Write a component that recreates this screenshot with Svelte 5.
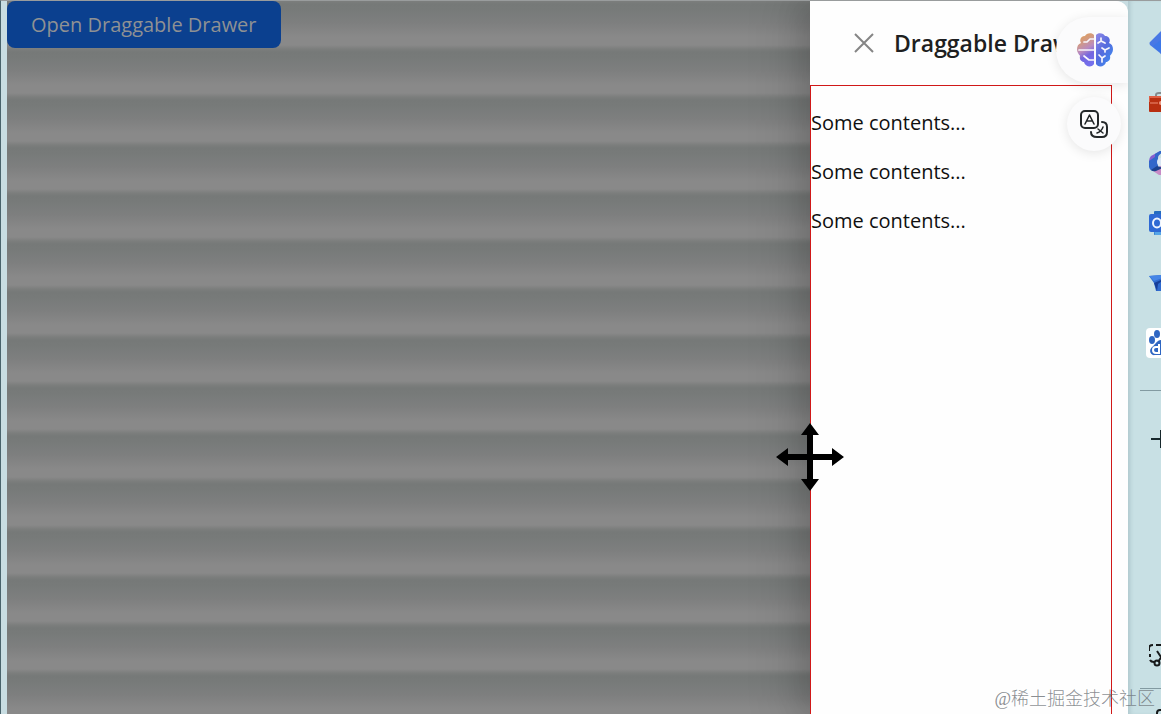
<script>
    let open = true;
    let contents = ['Some contents...', 'Some contents...', 'Some contents...'];
    let apps = ['Shopping', 'Tools', 'Microsoft 365', 'Outlook', 'Drop', 'Baidu'];
</script>

<div class="window">
    <main>
        <div class="page">
            <button class="primary" on:click={() => (open = true)}>Open Draggable Drawer</button>
        </div>

        {#if open}
            <section class="drawer" aria-labelledby="drawer-title">
                <header>
                    <button class="close" aria-label="Close" on:click={() => (open = false)}>
                        <svg width="20" height="20" viewBox="0 0 20 20">
                            <path d="M1 1 19 19M19 1 1 19" fill="none" stroke="#858585" stroke-width="2" />
                        </svg>
                    </button>
                    <h2 id="drawer-title">Draggable Drawer</h2>
                </header>
                <div class="drawer-body">
                    {#each contents as text}
                        <p>{text}</p>
                    {/each}
                </div>
                <!-- move pointer on the drag edge -->
                <svg class="pointer" width="68" height="68" viewBox="0 0 68 68" aria-hidden="true">
                    <path d="M34 0 43 12H37V31H56V25L68 34 56 43V37H37V56H43L34 68 25 56H31V37H12V43L0 34 12 25V31H31V12H25Z" />
                </svg>
            </section>
        {/if}

        <!-- floating extension buttons -->
        <div class="floating">
            <button class="brain" aria-label="Assistant">
                <svg width="36" height="34" viewBox="0 0 36 34">
                    <defs>
                        <linearGradient id="left-half" x1="0.3" y1="0" x2="0.6" y2="1">
                            <stop offset="0" stop-color="#df9e59" />
                            <stop offset="0.25" stop-color="#d29a83" />
                            <stop offset="0.5" stop-color="#b98bc0" />
                            <stop offset="0.7" stop-color="#7466df" />
                            <stop offset="1" stop-color="#7470ed" />
                        </linearGradient>
                        <linearGradient id="right-half" x1="0" y1="0" x2="0.8" y2="1">
                            <stop offset="0" stop-color="#9089e8" />
                            <stop offset="0.5" stop-color="#566bdd" />
                            <stop offset="1" stop-color="#3e8af0" />
                        </linearGradient>
                    </defs>
                    <path fill="url(#left-half)" d="M17 2C15-1 9 0 8 3 4 3 2 7 4 10 0 11-1 17 1 20 2 22 3 22 3 23 2 27 5 29 7 29 8 34 15 35 17 31Z" />
                    <path fill="url(#right-half)" d="M19 2C21-1 27 0 28 3 32 3 34 7 32 10 36 11 37 17 35 20 34 22 33 22 33 23 34 27 31 29 29 29 28 34 21 35 19 31Z" />
                    <path fill="none" stroke="#f7f6fc" stroke-width="1.7" stroke-linecap="round" stroke-linejoin="round" d="M17 6H13L10 9H7M17 17H2M7 23 12 27H17M24 5V8L21 10M24 8 28 10M25 15 28 17 32 15M28 17V19M22 22 25 25 28 23M25 25V29" />
                </svg>
            </button>
            <button class="translate" aria-label="Translate">
                <svg width="28" height="28" viewBox="0 0 28 28" fill="none" stroke="#24282a" stroke-width="2" stroke-linecap="round" stroke-linejoin="round">
                    <rect x="1" y="1" width="17" height="17" rx="4" />
                    <path stroke-width="1.6" d="M5 14 9.500 5 14 14M6.500 11H12.500" />
                    <path d="M22 12C25 12 27 14 27 17V22C27 25 25 27 22 27H17C13 27 11 25 11 22" />
                    <path stroke-width="1.500" d="M17 23C20 22 22 20 23 17M18 19 23 23" />
                </svg>
            </button>
        </div>
    </main>

    <aside aria-label="Sidebar">
        <nav>
            {#each apps as app}
                <button class="tool" aria-label={app}>
                    {#if app === 'Shopping'}
                        <svg width="24" height="24" viewBox="0 0 24 24">
                            <path fill="#4878e5" d="M1 11 11 1Q12 0 14 0H24V24H14Q12 24 11 22L1 14Q0 12 1 11Z" />
                            <path fill="#3d78e8" d="M4 15 12 9V22Z" />
                        </svg>
                    {:else if app === 'Tools'}
                        <svg width="24" height="24" viewBox="0 0 24 24">
                            <path d="M7 6V4Q7 2 10 2H18V6" fill="none" stroke="#858c8e" stroke-width="2" />
                            <rect y="5" width="28" height="16" rx="1" fill="#b82f10" />
                            <path fill="#df6044" d="M0 5H24V7H1V11H0Z" />
                            <path d="M1 12H9M14 12H24" stroke="#ee8e75" />
                            <circle cx="12" cy="12" r="2" fill="#ef9b85" />
                        </svg>
                    {:else if app === 'Microsoft 365'}
                        <svg width="24" height="24" viewBox="0 0 24 24">
                            <path fill="#855ed0" d="M11 0 2 5Q0 7 0 10V15L8 10Z" />
                            <path fill="#c78bc6" d="M4 20 11 15 22 11V19L14 24Q12 25 10 24Z" />
                            <path fill="#3167ca" d="M11 0H15L9 5V16L5 20Q1 20 0 16V10L6 6V3Z" />
                            <path fill="#1c438e" d="M2 19 8 15 14 17 7 20Q4 21 2 19Z" />
                            <circle cx="12" cy="11" r="4" fill="#d9e6f4" />
                        </svg>
                    {:else if app === 'Outlook'}
                        <svg width="24" height="24" viewBox="0 0 24 24">
                            <rect x="5" width="20" height="24" rx="1" fill="#236bc0" />
                            <path fill="#55a5e7" d="M5 20H24V24H6Z" />
                            <rect y="3" width="17" height="18" rx="2" fill="#2e69d4" />
                            <ellipse cx="8" cy="12" rx="4" ry="4.500" fill="none" stroke="#edf4ff" stroke-width="2" />
                        </svg>
                    {:else if app === 'Drop'}
                        <svg width="24" height="24" viewBox="0 0 24 24">
                            <path fill="#306bcf" d="M0 5 24 3 13 20H7L5 12Z" />
                            <path fill="#173f98" d="M5 12 17 7 9 13 8 20Z" />
                            <path fill="#4585e6" d="M0 5 24 3 5 10Z" />
                        </svg>
                    {:else}
                        <span class="tile">
                            <svg width="30" height="30" viewBox="0 0 30 30" fill="#2e66c2">
                                <ellipse cx="6" cy="12" rx="3" ry="4" />
                                <ellipse cx="11" cy="6" rx="3" ry="4" />
                                <ellipse cx="19" cy="6" rx="3" ry="4" />
                                <ellipse cx="25" cy="12" rx="3" ry="4" />
                                <path d="M15 12C11 12 9 17 6 19 2 23 5 28 9 27H21C27 27 27 22 24 19 20 16 19 12 15 12Z" />
                                <path fill="none" stroke="#fff" stroke-width="2" d="M13 16V25H10Q7 25 7 22T10 19H13" />
                            </svg>
                        </span>
                    {/if}
                </button>
            {/each}
            <hr />
            <button class="tool add" aria-label="Customize">
                <svg width="20" height="20" viewBox="0 0 20 20">
                    <path d="M0 10H20M10 1V19" stroke="#17282c" stroke-width="2" />
                </svg>
            </button>
        </nav>
        <div class="bottom-tools">
            <button class="tool" aria-label="Screenshot">
                <svg width="24" height="24" viewBox="0 0 24 24" fill="none" stroke="#17191a" stroke-width="2">
                    <path d="M0 8V5Q0 2 4 2M7 2H12M15 2H20M1 11V14M1 17Q2 19 5 19" />
                    <path d="M8 8 16 20M17 7 9 19" />
                    <circle cx="8" cy="20" r="2.500" />
                </svg>
            </button>
            <hr />
            <button class="tool settings" aria-label="Settings">
                <svg width="16" height="16" viewBox="0 0 16 16" fill="none" stroke="#17191a" stroke-width="2">
                    <rect x="1" y="1" width="14" height="14" rx="3" />
                </svg>
            </button>
        </div>
    </aside>

    <span class="watermark">@稀土掘金技术社区</span>
</div>

<style>
    :global(body) {
        margin: 0;
        background: #c8e0e4;
    }

    .window {
        position: relative;
        display: flex;
        height: 100vh;
        box-sizing: border-box;
        padding-left: 4px;
        border-left: 1px solid #49636b;
        border-top: 1px solid #999c9d;
        overflow: hidden;
        background: #c8dde2;
        font-family: "Open Sans", "Noto Sans", sans-serif;
    }

    button {
        margin: 0;
        padding: 0;
        border: none;
        background: none;
        font-family: inherit;
        cursor: pointer;
    }

    svg {
        display: block;
        flex: none;
    }

    main {
        position: relative;
        display: flex;
        flex: 1;
        min-width: 0;
        margin-left: 2px;
        border-top-right-radius: 12px;
        overflow: hidden;
        background: #fff;
    }

    .page {
        flex: 1;
        min-width: 0;
        background: repeating-linear-gradient(#7c7e7d 0, #767978 3px, #777a79 8px, #7e7f7f 22px, #898989 36px, #898989 44px, #7c7e7d 48px);
    }

    .primary {
        height: 47px;
        padding: 0 24px;
        border-radius: 8px;
        background: #0b408f;
        color: #8f9193;
        font-size: 20px;
        white-space: nowrap;
    }

    .drawer {
        position: relative;
        display: flex;
        flex-direction: column;
        width: 318px;
        background: #fefefe;
        box-shadow: -9px 0 24px rgba(0, 0, 0, 0.12), -14px 0 42px 12px rgba(0, 0, 0, 0.08);
    }

    header {
        display: flex;
        align-items: center;
        gap: 20px;
        height: 84px;
        padding-left: 44px;
    }

    h2 {
        margin: 0;
        color: #1e1f21;
        font-size: 23px;
        font-weight: 600;
        white-space: nowrap;
    }

    .drawer-body {
        flex: 1;
        margin-right: 16px;
        padding-top: 23px;
        border: 1px solid #d01818;
        border-bottom: none;
        color: #101010;
        font-size: 20px;
        line-height: 28px;
    }

    p {
        margin: 0 0 21px;
    }

    .pointer {
        position: absolute;
        top: 64%;
        left: 0;
        transform: translate(-50%, -50%);
        pointer-events: none;
    }

    .floating {
        position: absolute;
        top: 16px;
        right: 0;
        display: flex;
        flex-direction: column;
        align-items: flex-end;
        gap: 14px;
    }

    .brain,
    .translate {
        display: flex;
        align-items: center;
        background: #fbfbfc;
        box-shadow: 0 2px 12px rgba(0, 0, 0, 0.1);
    }

    .brain {
        width: 72px;
        height: 66px;
        padding-left: 21px;
        border-radius: 33px 0 0 33px;
    }

    .translate {
        justify-content: center;
        width: 54px;
        height: 54px;
        margin-right: 7px;
        border-radius: 50%;
    }

    aside {
        display: flex;
        flex-direction: column;
        width: 33px;
        overflow: hidden;
        background: #c8e0e4;
        box-shadow: inset 4px 0 4px -2px rgba(70, 100, 110, 0.2);
    }

    nav {
        flex: 1;
        padding-top: 12px;
    }

    .tool {
        display: flex;
        align-items: center;
        width: 100%;
        height: 60px;
        padding-left: 21px;
    }

    .tool:has(.tile) {
        padding-left: 18px;
    }

    .add {
        padding-left: 23px;
    }

    .tile {
        border-radius: 4px;
        background: #fff;
    }

    hr {
        height: 1px;
        margin: 17px 0 18px 12px;
        border: none;
        background: #829aa1;
    }

    .bottom-tools {
        height: 89px;
    }

    .bottom-tools hr {
        margin: 3px 0 20px 12px;
    }

    .settings {
        align-items: flex-start;
        padding-left: 28px;
    }

    .watermark {
        position: absolute;
        right: 6px;
        bottom: 3px;
        color: rgba(100, 105, 110, 0.75);
        font-family: "Liberation Serif", "Noto Sans CJK SC", serif;
        font-size: 18px;
        font-weight: 300;
        line-height: 24px;
        pointer-events: none;
    }
</style>
